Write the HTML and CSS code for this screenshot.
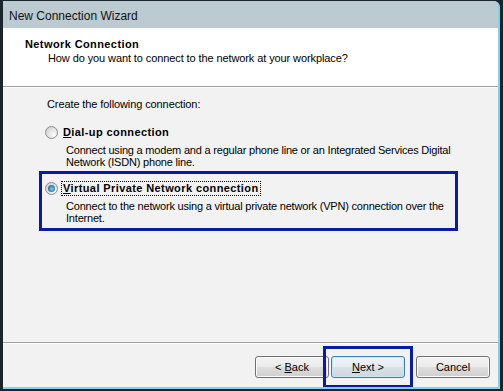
FILE: index.html
```html
<!DOCTYPE html>
<html lang="en">

<head>
    <meta charset="UTF-8">
    <title>New Connection Wizard</title>
    <link rel="stylesheet" href="styles.css">
</head>

<body>

    <div class="window">
        <div class="titlebar">New Connection Wizard</div>

        <div class="header">
            <div class="header-title">Network Connection</div>
            <div class="header-sub">How do you want to connect to the network at your workplace?</div>
        </div>

        <div class="content">
            <p class="prompt">Create the following connection:</p>

            <div class="option option-first">
                <div class="option-row">
                    <span class="radio"></span>
                    <span class="option-label"><u>D</u>ial-up connection</span>
                </div>
                <p class="option-desc">Connect using a modem and a regular phone line or an Integrated Services Digital<br>Network (ISDN) phone line.</p>
            </div>

            <div class="option option-marked">
                <div class="option-row">
                    <span class="radio checked"></span>
                    <span class="option-label focused"><u>V</u>irtual Private Network connection</span>
                </div>
                <p class="option-desc">Connect to the network using a virtual private network (VPN) connection over the<br>Internet.</p>
            </div>
        </div>

        <div class="footer">
            <button class="btn">&lt; <u>B</u>ack</button>
            <span class="next-wrap">
                <button class="btn btn-default"><u>N</u>ext &gt;</button>
            </span>
            <button class="btn btn-cancel">Cancel</button>
        </div>
    </div>

</body>

</html>
```

FILE: styles.css
```css
body {
    margin: 0;
    background: #1b262c;
    font-family: "Liberation Sans", Arial, sans-serif;
    font-size: 11px;
    letter-spacing: -0.1px;
    color: #000;
}

.window {
    display: flex;
    flex-direction: column;
    box-sizing: border-box;
    width: 497px;
    height: 388px;
    margin: 1px 3px 0 3px;
    border-right: 2px solid #86cfea;
    border-bottom: 2px solid #86cfea;
    border-top-right-radius: 6px;
    background: #f2f2f2;
    overflow: hidden;
}

.titlebar {
    height: 27px;
    box-sizing: border-box;
    padding: 3px 0 0 6px;
    line-height: 24px;
    font-size: 12px;
    letter-spacing: 0;
    background: #bccad1;
    color: #111;
}

.header {
    height: 59px;
    box-sizing: border-box;
    padding: 10px 0 0 22px;
    background: #fff;
    border-bottom: 1px solid #a0a0a0;
}

.header-title {
    font-weight: bold;
    letter-spacing: 0.4px;
    line-height: 13px;
}

.header-sub {
    margin: 1px 0 0 23px;
    line-height: 13px;
}

.content {
    flex: 1;
    padding-top: 10px;
    border-top: 1px solid #fff;
}

.prompt {
    margin: 0 0 0 44px;
    line-height: 13px;
}

.option {
    width: 419px;
    box-sizing: border-box;
    margin-left: 36px;
    padding: 0 3px;
    border: 3px solid transparent;
}

.option-first {
    margin-top: 12px;
}

.option-marked {
    border-color: #0c1ca0;
    padding-top: 8px;
    padding-bottom: 4px;
}

.option-row {
    display: flex;
    align-items: center;
    height: 13px;
}

.radio {
    position: relative;
    width: 13px;
    height: 13px;
    box-sizing: border-box;
    border: 1px solid #8c8e8f;
    border-radius: 50%;
    background: radial-gradient(circle at 70% 70%, #fbfbfb 0%, #e4e4e4 45%, #c9c9c9 100%);
}

.radio.checked::after {
    content: "";
    position: absolute;
    left: 2px;
    top: 2px;
    width: 7px;
    height: 7px;
    border-radius: 50%;
    background: radial-gradient(circle at 55% 55%, #8fd6f2 0%, #3a8fbd 45%, #1d4f6e 100%);
}

.option-label {
    margin-left: 4px;
    padding: 0 1px;
    font-weight: bold;
    letter-spacing: 0.4px;
    line-height: 13px;
}

.focused {
    outline: 1px dotted #000;
}

.option-desc {
    margin: 5px 0 0 21px;
    line-height: 12px;
    letter-spacing: -0.2px;
    white-space: nowrap;
}

.footer {
    display: flex;
    justify-content: flex-end;
    align-items: flex-start;
    height: 45px;
    box-sizing: border-box;
    padding: 13px 8px 0 0;
    border-top: 1px solid #a0a0a0;
    box-shadow: inset 0 1px #fff;
}

.btn {
    width: 74px;
    height: 22px;
    padding: 0;
    font-family: "Liberation Sans", Arial, sans-serif;
    font-size: 11px;
    letter-spacing: 0;
    color: #000;
    border: 1px solid #707070;
    border-radius: 3px;
    background: linear-gradient(#f2f2f2 0%, #ebebeb 48%, #dddddd 52%, #cfcfcf 100%);
    box-shadow: inset 0 0 0 1px #fbfbfb;
}

.next-wrap {
    position: relative;
    margin-left: 2px;
}

.next-wrap::after {
    content: "";
    position: absolute;
    left: -8px;
    right: -8px;
    top: -10px;
    bottom: -10px;
    border: 3px solid #0c1ca0;
}

.btn-default {
    border-color: #3c7fb1;
    background: linear-gradient(#eef3f6 0%, #e6edf1 48%, #d8e1e6 52%, #cdd7dc 100%);
    box-shadow: inset 0 0 0 1px #c2e8f8;
}

.btn-cancel {
    margin-left: 11px;
}
```
